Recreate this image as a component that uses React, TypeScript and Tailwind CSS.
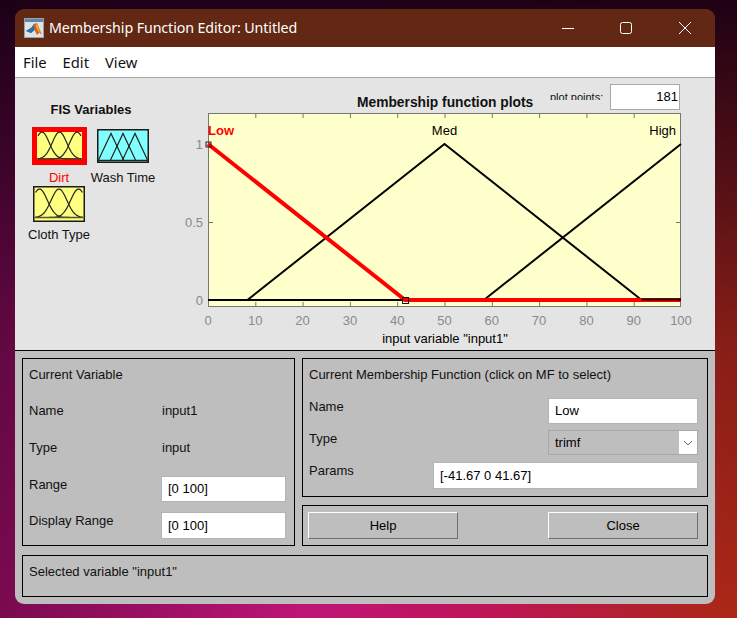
import React from "react";

const arial = "font-['Liberation_Sans',Arial,sans-serif]";

function gaussPath(c: number, s: number, x0: number, w: number, yTop: number, yBot: number) {
  const pts: string[] = [];
  for (let i = 0; i <= 40; i++) {
    const x = x0 + (w * i) / 40;
    const v = Math.exp(-((x - c) * (x - c)) / (2 * s * s));
    pts.push(`${i === 0 ? "M" : "L"}${x.toFixed(2)} ${(yBot - (yBot - yTop) * v).toFixed(2)}`);
  }
  return pts.join(" ");
}

function GaussIcon({ selected }: { selected?: boolean }) {
  const w = selected ? 55 : 52;
  const h = selected ? 38 : 36;
  const x0 = selected ? 5 : 1.5;
  const inner = selected ? 45 : 49;
  const yTop = selected ? 5 : 3;
  const yBot = selected ? 33 : 32.5;
  return (
    <svg width={w} height={h} viewBox={`0 0 ${w} ${h}`} className="block">
      {selected ? (
        <rect x="2.5" y="2.5" width={w - 5} height={h - 5} fill="#ffff80" stroke="#ff0000" strokeWidth="5" />
      ) : (
        <rect x="0.75" y="0.75" width={w - 1.5} height={h - 1.5} fill="#ffff80" stroke="#1a1a1a" strokeWidth="1.5" />
      )}
      {[0, 0.5, 1].map((f) => (
        <path
          key={f}
          d={gaussPath(x0 + 5 + (inner - 10) * f, inner * 0.16, x0 + 1, inner - 2, yTop, yBot - 1)}
          fill="none"
          stroke="#222"
          strokeWidth="1.2"
        />
      ))}
      <line x1={x0} x2={x0 + inner} y1={yBot - 1} y2={yBot - 1} stroke={selected ? "#7a1010" : "#55552a"} strokeWidth="1.5" />
    </svg>
  );
}

function TriIcon() {
  return (
    <svg width="52" height="34" viewBox="0 0 52 34" className="block">
      <rect x="0.75" y="0.75" width="50.5" height="32.5" fill="#80ffff" stroke="#1a1a1a" strokeWidth="1.5" />
      {[14, 26, 38].map((c) => (
        <path key={c} d={`M${c - 12.5} 31 L${c} 4.5 L${c + 12.5} 31`} fill="none" stroke="#222" strokeWidth="1.2" />
      ))}
      <line x1="1" x2="51" y1="31.5" y2="31.5" stroke="#222" strokeWidth="1.5" />
    </svg>
  );
}

function MatlabIcon() {
  return (
    <svg width="20" height="20" viewBox="0 0 20 20" className="block shrink-0">
      <rect x="0.5" y="0.5" width="19" height="19" fill="#dfe3e6" stroke="#9aa3aa" />
      <rect x="1" y="1" width="18" height="3" fill="#5f86ab" />
      <path d="M2 13 L7.5 9.5 L10 6 L13 5 L18 17 L15.5 14.5 L13 17 L10.5 12 L7 15 Z" fill="#d9661f" />
      <path d="M2 13 L7.5 9.5 L10 6 L10.5 12 L7 15 Z" fill="#2a6fb5" />
      <path d="M13 5 L16 13 L14.5 14 L11.5 8 Z" fill="#f0a02c" />
    </svg>
  );
}

function Field({ children, className }: { children: React.ReactNode; className: string }) {
  return (
    <div className={`flex items-center bg-white border border-[#b4b4b4] pl-[6px] text-[13px] text-black ${className}`}>
      {children}
    </div>
  );
}

function PushButton({ label }: { label: string }) {
  return (
    <div className="flex items-center justify-center w-[150px] h-[27px] bg-[#bebebe] border-[1.5px] border-t-white border-l-white border-r-[#6e6e6e] border-b-[#6e6e6e] text-[13px] text-black">
      {label}
    </div>
  );
}

function Plot() {
  const X = (v: number) => 208 + 4.73 * v;
  const ticks = [0, 10, 20, 30, 40, 50, 60, 70, 80, 90, 100];
  return (
    <svg width="535" height="240" viewBox="180 110 535 240" className="block" fontFamily="'Liberation Sans', Arial, sans-serif" fontSize="13">
      <rect x="208.5" y="113.5" width="472" height="193" fill="#ffffcc" stroke="#777" />
      {ticks.map((t) => (
        <g key={t}>
          {t > 0 && t < 100 && (
            <>
              <line x1={X(t) + 0.5} x2={X(t) + 0.5} y1="114" y2="118" stroke="#777" />
              <line x1={X(t) + 0.5} x2={X(t) + 0.5} y1="302" y2="306" stroke="#777" />
            </>
          )}
          <text x={X(t)} y="325" textAnchor="middle" fill="#8a8a8a">{t}</text>
        </g>
      ))}
      <text x="203" y="149" textAnchor="end" fill="#8a8a8a">1</text>
      <text x="203" y="227" textAnchor="end" fill="#8a8a8a">0.5</text>
      <text x="203" y="305" textAnchor="end" fill="#8a8a8a">0</text>
      <line x1="209" x2="213" y1="222.5" y2="222.5" stroke="#777" />
      <line x1="676" x2="680" y1="222.5" y2="222.5" stroke="#777" />

      <line x1="208" x2={X(41.67)} y1="300" y2="300" stroke="#000" strokeWidth="2" />
      <path d={`M${X(8.33)} 300 L${X(50)} 144 L${X(91.67)} 300`} fill="none" stroke="#000" strokeWidth="2" />
      <path d={`M${X(58.33)} 300 L${X(100)} 144`} fill="none" stroke="#000" strokeWidth="2" />
      <path d={`M208 144 L${X(41.67)} 300 L681 300`} fill="none" stroke="#ff0000" strokeWidth="4" />
      <line x1={X(91.67)} x2="681" y1="299.5" y2="299.5" stroke="#000" strokeWidth="2" />
      <rect x="206" y="142" width="5" height="5" fill="none" stroke="#222" />
      <rect x={X(41.67) - 2.5} y="297.5" width="6" height="6" fill="none" stroke="#111" />

      <text x="208" y="135" fill="#ff0000" fontWeight="700">Low</text>
      <text x="444.5" y="135" textAnchor="middle" fill="#000">Med</text>
      <text x="676" y="135" textAnchor="end" fill="#000">High</text>
      <text x="445" y="343" textAnchor="middle" fill="#000">input variable "input1"</text>
    </svg>
  );
}

export default function App() {
  return (
    <div className="w-[737px] h-[618px] overflow-hidden pt-[9px] pl-[15px] bg-[linear-gradient(to_bottom,rgba(24,0,20,0.96)_0%,rgba(24,0,20,0.65)_25%,rgba(24,0,20,0.25)_55%,rgba(24,0,20,0)_100%),linear-gradient(to_right,#7a0a50_0%,#c01578_42%,#c0145a_65%,#ab2815_100%)]">
      <div className={`w-[700px] h-[595px] flex flex-col rounded-[9px] overflow-hidden ${arial}`}>
        {/* Title bar */}
        <div className="h-[38px] shrink-0 bg-[#622814] flex items-center pl-[9px] text-white">
          <MatlabIcon />
          <span className="ml-[5px] text-[14.25px] font-['Noto_Sans',sans-serif] tracking-[-0.1px]">
            Membership Function Editor: Untitled
          </span>
          <svg width="129" height="14" viewBox="0 0 129 14" className="block ml-auto mr-[24px]" fill="none" stroke="#fff">
            <line x1="0" x2="12" y1="7.5" y2="7.5" />
            <rect x="58.5" y="1.5" width="11" height="11" rx="2" />
            <path d="M117 1 L129 13 M129 1 L117 13" />
          </svg>
        </div>

        {/* Menu */}
        <div className="h-[31px] shrink-0 bg-white border-b border-[#a8a8a8] flex items-center gap-[16px] pl-[8px] text-[14.75px] text-[#111] font-['Noto_Sans',sans-serif]">
          <span>File</span>
          <span>Edit</span>
          <span>View</span>
        </div>

        {/* Upper area */}
        <div className="h-[273px] shrink-0 bg-[#e4e4e4] border-b border-black flex">
          <div className="w-[165px] shrink-0 pt-[25px] text-[13px] text-[#111]">
            <div className="w-[152px] text-center font-bold leading-[14px]">FIS Variables</div>
            <div className="mt-[10px] ml-[12px] grid grid-cols-[64px_64px]">
              <div className="flex flex-col items-center">
                <div className="h-[38px] flex items-center"><GaussIcon selected /></div>
                <div className="mt-[6px] leading-[14px] text-[#ff0000] whitespace-nowrap">Dirt</div>
              </div>
              <div className="flex flex-col items-center">
                <div className="h-[38px] flex items-center"><TriIcon /></div>
                <div className="mt-[6px] leading-[14px] whitespace-nowrap">Wash Time</div>
              </div>
              <div className="flex flex-col items-center mt-[1px]">
                <GaussIcon />
                <div className="mt-[6px] leading-[14px] whitespace-nowrap">Cloth Type</div>
              </div>
            </div>
          </div>
          <div className="flex flex-col">
            <div className="h-[32px] shrink-0 flex items-start pt-[6px] text-[#111]">
              <div className="ml-[177px] mt-[11px] w-[193px] text-[13.8px] font-bold leading-[16px] whitespace-nowrap">
                Membership function plots
              </div>
              <div className="mt-[6px] h-[10px] w-[60px] overflow-hidden text-[11px] leading-[14px] whitespace-nowrap">
                plot points:
              </div>
              <div className="flex items-center justify-end w-[70px] h-[26px] bg-white border border-[#a8a8a8] pr-[1px] text-[13px] text-black">
                181
              </div>
            </div>
            <Plot />
          </div>
        </div>

        {/* Lower area */}
        <div className="flex-1 bg-[#bebebe] px-[7px] pt-[7px] flex flex-col gap-[9px] text-[13px] leading-[14px] text-[#111]">
          <div className="flex gap-[7px]">
            <div className="w-[273px] h-[188px] border border-black pl-[6px] pt-[9px]">
              <div>Current Variable</div>
              <div className="mt-[22px] flex">
                <div className="w-[132px]">Name</div>
                <div className="pl-px">input1</div>
              </div>
              <div className="mt-[23px] flex">
                <div className="w-[132px]">Type</div>
                <div className="pl-px">input</div>
              </div>
              <div className="mt-[21px] flex">
                <div className="w-[132px] pt-[2px]">Range</div>
                <Field className="w-[125px] h-[26px]">[0 100]</Field>
              </div>
              <div className="mt-[10px] flex">
                <div className="w-[132px] pt-[2px]">Display Range</div>
                <Field className="w-[125px] h-[27px]">[0 100]</Field>
              </div>
            </div>
            <div className="w-[406px] flex flex-col gap-[8px]">
              <div className="h-[139px] border border-black pl-[6px] pr-[9px] pt-[9px]">
                <div>Current Membership Function (click on MF to select)</div>
                <div className="mt-[16px] flex justify-between">
                  <div className="pt-[2px]">Name</div>
                  <Field className="w-[150px] h-[26px]">Low</Field>
                </div>
                <div className="mt-[6px] flex justify-between">
                  <div className="pt-[2px]">Type</div>
                  <div className="flex w-[150px] h-[25px] border border-[#a8a8a8] text-black">
                    <div className="flex-1 flex items-center pl-[6px]">trimf</div>
                    <div className="w-[18px] bg-white flex items-center justify-center">
                      <svg width="10" height="6" viewBox="0 0 10 6" fill="none" stroke="#666" className="block">
                        <path d="M1 1 L5 5 L9 1" />
                      </svg>
                    </div>
                  </div>
                </div>
                <div className="mt-[7px] flex justify-between">
                  <div className="pt-[2px]">Params</div>
                  <Field className="w-[265px] h-[27px]">[-41.67 0 41.67]</Field>
                </div>
              </div>
              <div className="h-[41px] border border-black pl-[5px] pr-[9px] pt-[6px] flex justify-between items-start">
                <PushButton label="Help" />
                <PushButton label="Close" />
              </div>
            </div>
          </div>
          <div className="h-[42px] w-[686px] border border-black pl-[6px] pt-[9px]">
            Selected variable "input1"
          </div>
        </div>
      </div>
    </div>
  );
}
